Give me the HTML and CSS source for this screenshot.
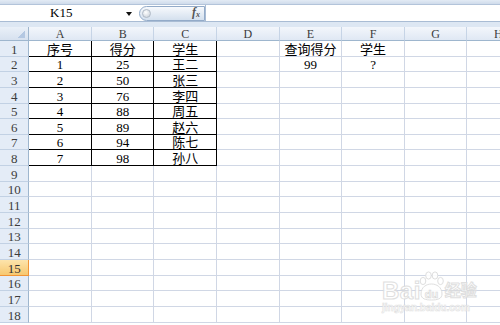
FILE: index.html
```html
<!DOCTYPE html>
<html lang="zh-CN">
<head>
    <meta charset="UTF-8">
    <meta name="viewport" content="width=device-width, initial-scale=1.0">
    <title>Excel - 查询得分</title>
    <link rel="stylesheet" href="styles.css">
</head>
<body>
    <div class="top-band"></div>
    <div class="formula-bar">
        <div class="name-box">
            <span class="name">K15</span>
            <span class="arrow"></span>
        </div>
        <div class="fx-btn">
            <span class="knob"></span>
            <span class="fx">f<sub>x</sub></span>
        </div>
        <div class="formula-input"></div>
    </div>
    <div class="gap-band"></div>

    <div class="sheet">
        <table class="grid">
            <colgroup>
                <col class="rh">
                <col class="c"><col class="c"><col class="c"><col class="c">
                <col class="c"><col class="c"><col class="c"><col class="c">
            </colgroup>
            <thead>
                <tr class="hdr">
                    <th class="corner"></th>
                    <th class="col">A</th><th class="col">B</th><th class="col">C</th><th class="col">D</th>
                    <th class="col">E</th><th class="col">F</th><th class="col">G</th><th class="col">H</th>
                </tr>
            </thead>
            <tbody>
                <tr><th class="row">1</th><td class="b">序号</td><td class="b">得分</td><td class="b">学生</td><td></td><td>查询得分</td><td>学生</td><td></td><td></td></tr>
                <tr><th class="row">2</th><td class="b">1</td><td class="b">25</td><td class="b">王二</td><td></td><td>99</td><td>?</td><td></td><td></td></tr>
                <tr><th class="row">3</th><td class="b">2</td><td class="b">50</td><td class="b">张三</td><td></td><td></td><td></td><td></td><td></td></tr>
                <tr><th class="row">4</th><td class="b">3</td><td class="b">76</td><td class="b">李四</td><td></td><td></td><td></td><td></td><td></td></tr>
                <tr><th class="row">5</th><td class="b">4</td><td class="b">88</td><td class="b">周五</td><td></td><td></td><td></td><td></td><td></td></tr>
                <tr><th class="row">6</th><td class="b">5</td><td class="b">89</td><td class="b">赵六</td><td></td><td></td><td></td><td></td><td></td></tr>
                <tr><th class="row">7</th><td class="b">6</td><td class="b">94</td><td class="b">陈七</td><td></td><td></td><td></td><td></td><td></td></tr>
                <tr><th class="row">8</th><td class="b">7</td><td class="b">98</td><td class="b">孙八</td><td></td><td></td><td></td><td></td><td></td></tr>
                <tr><th class="row">9</th><td></td><td></td><td></td><td></td><td></td><td></td><td></td><td></td></tr>
                <tr><th class="row">10</th><td></td><td></td><td></td><td></td><td></td><td></td><td></td><td></td></tr>
                <tr><th class="row">11</th><td></td><td></td><td></td><td></td><td></td><td></td><td></td><td></td></tr>
                <tr><th class="row">12</th><td></td><td></td><td></td><td></td><td></td><td></td><td></td><td></td></tr>
                <tr><th class="row">13</th><td></td><td></td><td></td><td></td><td></td><td></td><td></td><td></td></tr>
                <tr><th class="row">14</th><td></td><td></td><td></td><td></td><td></td><td></td><td></td><td></td></tr>
                <tr><th class="row sel">15</th><td></td><td></td><td></td><td></td><td></td><td></td><td></td><td></td></tr>
                <tr><th class="row">16</th><td></td><td></td><td></td><td></td><td></td><td></td><td></td><td></td></tr>
                <tr><th class="row">17</th><td></td><td></td><td></td><td></td><td></td><td></td><td></td><td></td></tr>
                <tr><th class="row">18</th><td></td><td></td><td></td><td></td><td></td><td></td><td></td><td></td></tr>
            </tbody>
        </table>
    </div>

    <!-- watermark sits over the grid -->
    <div class="watermark">
        <div class="wm-logo">
            <span class="wm-bai">Bai</span>
            <svg class="wm-paw" width="28" height="31" viewBox="0 0 28 31">
                <ellipse cx="6" cy="10" rx="2.8" ry="3.6"/>
                <ellipse cx="11.5" cy="4.5" rx="2.8" ry="3.6"/>
                <ellipse cx="18" cy="4.5" rx="2.8" ry="3.6"/>
                <ellipse cx="23.5" cy="10" rx="2.8" ry="3.6"/>
                <path d="M4 23 C4 16 9.5 13 14.5 13 C19.5 13 25 16 25 23 C25 28 20 29 14.5 29 C9 29 4 28 4 23 Z"/>
                <text x="14.5" y="26.5" text-anchor="middle">du</text>
            </svg>
            <span class="wm-zh">经验</span>
        </div>
        <div class="wm-url">jingyan.baidu.com</div>
    </div>
</body>
</html>
```

FILE: styles.css
```css
body {
    margin: 0;
    width: 500px;
    height: 325px;
    overflow: hidden;
    position: relative;
    background: #fff;
    font-family: "Liberation Serif", "Noto Sans CJK SC", serif;
    color: #000;
}

.top-band {
    height: 5px;
    background: linear-gradient(#e3ebf5, #cfdbeb);
    border-bottom: 1px solid #b3c4da;
    box-sizing: border-box;
}

.formula-bar {
    display: flex;
    align-items: center;
    height: 17px;
    background: #fff;
    border-bottom: 1px solid #a9bcd4;
    box-sizing: border-box;
}

.name-box {
    width: 136px;
    height: 100%;
    display: flex;
    align-items: center;
    padding-left: 50px;
    box-sizing: border-box;
    font-family: "Liberation Serif", serif;
    font-size: 13px;
}

.name-box .arrow {
    margin-left: auto;
    margin-right: 4px;
    margin-top: 2px;
    border-left: 3px solid transparent;
    border-right: 3px solid transparent;
    border-top: 4px solid #111;
}

.fx-btn {
    width: 66px;
    height: 15px;
    margin-left: 3px;
    box-sizing: border-box;
    border: 1px solid #93abc9;
    border-radius: 8px 0 0 8px;
    background: linear-gradient(#f7f9fc, #d4e0ee);
    display: flex;
    align-items: center;
    justify-content: space-between;
    padding: 0 4px 0 2px;
}

.fx-btn .knob {
    width: 9px;
    height: 9px;
    border-radius: 50%;
    box-sizing: border-box;
    border: 1px solid #b0bac6;
    background: radial-gradient(circle at 40% 35%, #ffffff, #c3cbd5);
}

.fx-btn .fx {
    font-family: "Liberation Serif", serif;
    font-style: italic;
    font-weight: bold;
    font-size: 12px;
    line-height: 12px;
    color: #555;
}

.fx-btn .fx sub {
    font-size: 8px;
    vertical-align: -1px;
}

.formula-input {
    flex: 1;
    height: 100%;
    border-left: 1px solid #a9bcd4;
}

.gap-band {
    height: 5px;
    background: #dde7f3;
}

.sheet {
    overflow: hidden;
    width: 500px;
}

.grid {
    table-layout: fixed;
    border-spacing: 0;
    width: 530px;
    font-size: 13px;
}

.grid col.rh { width: 29.3px; }
.grid col.c { width: 62.6px; }

.grid tr.hdr { height: 14px; }
.grid tbody tr { height: 15.65px; }

.grid th {
    padding: 0;
    font-weight: normal;
    font-family: "Liberation Serif", serif;
    font-size: 13px;
    line-height: 12px;
    color: #3c3c3c;
}

.grid th.corner {
    background:
        linear-gradient(to top left, #b4c8e2 50%, transparent 50%) no-repeat right 3px bottom 2px / 8px 8px,
        linear-gradient(#eaf0f8, #d6e1ef);
    border-right: 1px solid #9eb6ce;
    border-bottom: 1px solid #9eb6ce;
}

.grid th.col {
    background: linear-gradient(#f3f6fb, #dfe8f4);
    border-right: 1px solid #c6d4e6;
    border-bottom: 1px solid #9eb6ce;
    vertical-align: bottom;
    font-size: 12px;
}

.grid th.row {
    background: #e4ecf7;
    border-right: 1px solid #9eb6ce;
    border-bottom: 1px solid #c2d1e4;
    vertical-align: bottom;
}

.grid th.row.sel {
    background: linear-gradient(#fde4ac, #f7c870);
    border-right-color: #f29436;
    border-bottom-color: #f29436;
    color: #333;
}

.grid td {
    padding: 0;
    border-right: 1px solid #d0d7e5;
    border-bottom: 1px solid #d0d7e5;
    text-align: center;
    vertical-align: bottom;
    line-height: 12px;
    white-space: nowrap;
    overflow: hidden;
}

.grid td.b {
    border-right-color: #000;
    border-bottom-color: #000;
}

.watermark {
    position: absolute;
    left: 382px;
    top: 271px;
    opacity: 0.9;
}

.wm-logo {
    display: flex;
    align-items: flex-end;
}

.wm-bai,
.wm-zh {
    font-family: "Liberation Sans", "Noto Sans CJK SC", sans-serif;
    font-weight: bold;
    color: #fff;
    -webkit-text-stroke: 1px #dcdcdc;
    line-height: 22px;
}

.wm-bai {
    font-size: 24px;
    letter-spacing: 0.5px;
}

.wm-zh {
    font-size: 16px;
}

.wm-paw {
    fill: #fff;
    stroke: #dcdcdc;
    stroke-width: 1;
    margin-left: -4px;
}

.wm-paw text {
    font-family: "Liberation Sans", sans-serif;
    font-weight: bold;
    font-size: 11px;
    fill: #fff;
    stroke: #d6d6d6;
    stroke-width: 0.7;
}

.wm-url {
    font-family: "Liberation Sans", sans-serif;
    font-size: 10px;
    font-weight: bold;
    color: #fff;
    -webkit-text-stroke: 0.6px #dedede;
}
```
